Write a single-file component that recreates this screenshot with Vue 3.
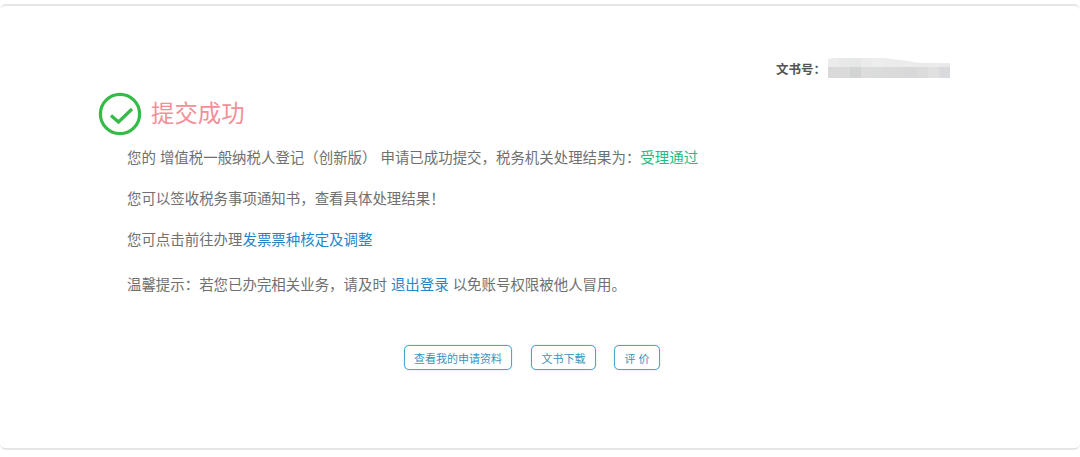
<script setup>
const topRow = ['#ebebeb', '#e8e8e8', '#e6e7e7', '#ebebeb', '#ededed', '#ececec', '#ebebeb', '#ececec', '#eaeaea', '#ebebeb', '#e9e9e9']
const bottomRow = ['#d9d9d9', '#dadada', '#d2d3d3', '#dcdcdc', '#dadbdb', '#dadada', '#dad9d9', '#d8d8da', '#dcdbdb', '#e0e0e0', '#d8dadd']
const lines = [
  { key: 'tip', text: '您可以签收税务事项通知书，查看具体处理结果！' },
]
const buttons = ['查看我的申请资料', '文书下载', '评 价']
</script>

<template>
  <div class="page">
    <div class="card">
      <div class="doc-no">
        <b>文书号：</b>
        <div class="mosaic">
          <span v-for="(c, i) in topRow" :key="'t' + i" :style="{ background: c }"></span>
          <span v-for="(c, i) in bottomRow" :key="'b' + i" :style="{ background: c }"></span>
        </div>
      </div>

      <div class="head">
        <svg width="44" height="44" viewBox="0 0 44 44">
          <circle cx="22" cy="22" r="19.6" fill="none" stroke="#35bb47" stroke-width="3.2" />
          <path d="M13 23.5 L20.5 30 L34 17" fill="none" stroke="#35bb47" stroke-width="3.2" />
        </svg>
        <h2>提交成功</h2>
      </div>

      <div class="msg">
        <p>您的 增值税一般纳税人登记（创新版） 申请已成功提交，税务机关处理结果为：<span class="green">受理通过</span></p>
        <p v-for="l in lines" :key="l.key">{{ l.text }}</p>
        <p>您可点击前往办理<a class="link">发票票种核定及调整</a></p>
        <p class="warm">温馨提示：若您已办完相关业务，请及时 <a class="link">退出登录</a> 以免账号权限被他人冒用。</p>
      </div>

      <div class="btns">
        <div v-for="b in buttons" :key="b" class="btn">{{ b }}</div>
      </div>
    </div>
  </div>
</template>

<style>
html, body {
  margin: 0;
  background: #fff;
}
</style>

<style scoped>
.page {
  width: 1080px;
  height: 457px;
  padding-top: 4px;
  box-sizing: border-box;
  font-family: "Liberation Sans", "Noto Sans CJK SC", sans-serif;
  overflow: hidden;
}
.card {
  height: 446px;
  box-sizing: border-box;
  border-top: 2px solid #e6e6e6;
  border-bottom: 2px solid #e6e6e6;
  border-radius: 6px;
  padding: 50px 0 0 98px;
}
.doc-no {
  display: flex;
  align-items: center;
  height: 24px;
  padding-left: 678px;
  font-size: 12.5px;
  color: #555;
}
.doc-no b {
  width: 52px;
  white-space: nowrap;
}
.mosaic {
  display: grid;
  grid-template-columns: repeat(11, 1fr);
  grid-template-rows: 9px 11px;
  width: 122px;
  height: 20px;
  clip-path: polygon(0 6%, 3% 0, 45% 0, 60% 10%, 75% 24%, 100% 26%, 100% 100%, 0 100%);
}
.head {
  display: flex;
  align-items: center;
  gap: 9px;
  margin-top: 12px;
}
.head h2 {
  margin: 0 0 4px;
  font-size: 23.4px;
  font-weight: 400;
  color: #f48f98;
}
.msg {
  padding-left: 29px;
  margin-top: 12px;
  font-size: 14.45px;
  color: #707070;
}
.msg p {
  margin: 0 0 21px;
  line-height: 20px;
}
.msg .warm {
  margin-top: 25px;
}
.green {
  color: #1fbb82;
}
.link {
  color: #2486c8;
}
.btns {
  display: flex;
  gap: 18px;
  padding-left: 306px;
  margin-top: 50px;
}
.btn {
  display: flex;
  align-items: center;
  justify-content: center;
  box-sizing: border-box;
  width: 65px;
  height: 25px;
  border: 1px solid #45a9cf;
  border-radius: 5px;
  box-shadow: 0 0 1px #45a9cf;
  color: #3a93b8;
  font-size: 11px;
}
.btn:first-child {
  width: 108px;
  margin-right: 1px;
}
.btn:last-child {
  width: 46px;
}
</style>
